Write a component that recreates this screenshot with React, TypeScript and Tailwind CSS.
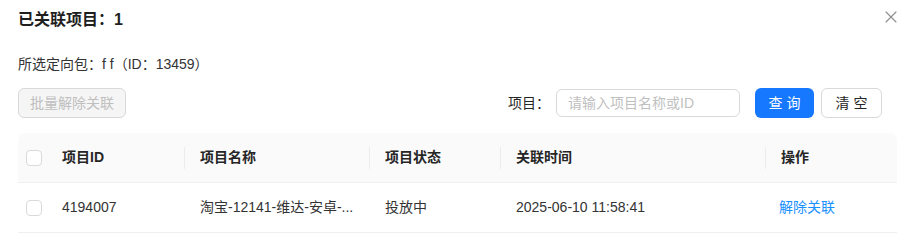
// Linked-projects modal body: summary, toolbar, and project table.

const FONT = '[font-family:"Liberation_Sans","Noto_Sans_CJK_SC",sans-serif]';

const GRID = 'grid grid-cols-[28px_138px_185px_131px_265px_1fr]';

function Checkbox() {
  return <span className="block w-4 h-4 rounded-[4px] border border-[#d9d9d9] bg-white" />;
}

function HeadCell({ label }: { label: string }) {
  return (
    <div className="flex items-center">
      <span className="w-px h-[22px] bg-[#ececec] mr-[15px]" />
      <span>{label}</span>
    </div>
  );
}

function CloseIcon() {
  return (
    <svg viewBox="0 0 12 12" className="w-[12px] h-[12px] mt-[1px]" aria-hidden>
      <path d="M1 1L11 11M11 1L1 11" stroke="#8c8c8c" strokeWidth="1.1" strokeLinecap="round" />
    </svg>
  );
}

export default function App() {
  return (
    <div className={`${FONT} w-[900px] h-[241px] bg-white pl-[18px] pr-[3px] pt-[10px] overflow-hidden text-[14px] text-[#262626]`}>
      {/* ─── Title ─── */}
      <div className="flex items-start justify-between h-[20px]">
        <h2 className="text-[16px] leading-[20px] font-bold text-[#1f1f1f]">已关联项目：1</h2>
        <CloseIcon />
      </div>

      <p className="mt-[24px] leading-[20px] text-[#333]">所选定向包：f f（ID：13459）</p>

      {/* ─── Toolbar ─── */}
      <div className="mt-[14px] h-[30px] flex items-center pr-[15px]">
        <button
          disabled
          className="h-[30px] px-[11px] rounded-[6px] border border-[#d9d9d9] bg-[#f5f5f5] text-[#bfbfbf] cursor-not-allowed"
        >
          批量解除关联
        </button>
        <div className="ml-auto flex items-center">
          <span className="text-[#262626] mr-[6px]">项目：</span>
          <input
            placeholder="请输入项目名称或ID"
            className="w-[184px] h-[28px] px-[11px] rounded-[6px] border border-[#d9d9d9] outline-none placeholder:text-[#bfbfbf]"
          />
          <button className="ml-[15px] w-[59px] h-[30px] rounded-[6px] bg-[#1677ff] text-white">查 询</button>
          <button className="ml-[7px] w-[61px] h-[30px] rounded-[6px] border border-[#d9d9d9] bg-white text-[#262626]">
            清 空
          </button>
        </div>
      </div>

      {/* ─── Table ─── */}
      <div className="mt-[15px]">
        <div className={`${GRID} h-[50px] bg-[#fafafa] rounded-t-[8px] border-b border-[#f0f0f0] font-semibold text-[#262626]`}>
          <div className="flex items-center pl-[8px]">
            <Checkbox />
          </div>
          <div className="flex items-center pl-[16px]">项目ID</div>
          <HeadCell label="项目名称" />
          <HeadCell label="项目状态" />
          <HeadCell label="关联时间" />
          <HeadCell label="操作" />
        </div>
        <div className={`${GRID} h-[50px] border-b border-[#f0f0f0] text-[#333]`}>
          <div className="flex items-center pl-[8px]">
            <Checkbox />
          </div>
          <div className="flex items-center pl-[16px]">4194007</div>
          <div className="flex items-center pl-[16px] pr-[12px] truncate">淘宝-12141-维达-安卓-...</div>
          <div className="flex items-center pl-[16px]">投放中</div>
          <div className="flex items-center pl-[16px]">2025-06-10 11:58:41</div>
          <div className="flex items-center pl-[14px]">
            <a className="text-[#1890ff] cursor-pointer">解除关联</a>
          </div>
        </div>
      </div>
    </div>
  );
}
